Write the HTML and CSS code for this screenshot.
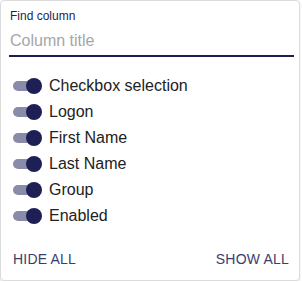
FILE: index.html
```html
<!DOCTYPE html>
<html>
<head>
    <title>Columns</title>
    <link rel="stylesheet" href="styles.css">
</head>
<body>

<div class="panel">
    <div class="find-field">
        <label class="find-label" for="find">Find column</label>
        <input id="find" class="find-input" type="text" placeholder="Column title">
    </div>

    <div class="column-list">
        <label class="column-item"><span class="switch"><span class="track"></span><span class="thumb"></span></span>Checkbox selection</label>
        <label class="column-item"><span class="switch"><span class="track"></span><span class="thumb"></span></span>Logon</label>
        <label class="column-item"><span class="switch"><span class="track"></span><span class="thumb"></span></span>First Name</label>
        <label class="column-item"><span class="switch"><span class="track"></span><span class="thumb"></span></span>Last Name</label>
        <label class="column-item"><span class="switch"><span class="track"></span><span class="thumb"></span></span>Group</label>
        <label class="column-item"><span class="switch"><span class="track"></span><span class="thumb"></span></span>Enabled</label>
    </div>

    <div class="panel-footer">
        <button class="text-button">Hide all</button>
        <button class="text-button">Show all</button>
    </div>
</div>

</body>
</html>
```

FILE: styles.css
```css
body {
    font-family: 'Liberation Sans', Arial, sans-serif;
    background-color: #fff;
    margin: 0;
    padding: 0;
}

.panel {
    width: 298px;
    height: 279px;
    border: 1px solid #dcdcdc;
    border-radius: 4px;
    box-shadow: 0 1px 2px rgba(0, 0, 0, 0.12);
    background-color: #fff;
    display: flex;
    flex-direction: column;
    box-sizing: content-box;
}

.find-field {
    display: flex;
    flex-direction: column;
    padding: 8px 8px 0 8px;
}

.find-label {
    font-size: 12px;
    color: #1d1f50;
    line-height: 14px;
    padding-left: 1px;
}

.find-input {
    font-family: inherit;
    font-size: 16px;
    color: #333;
    border: none;
    border-bottom: 2px solid #1d1f50;
    outline: none;
    padding: 5px 0 5px 1px;
    margin-top: 4px;
    margin-right: 0;
    width: 284px;
}

.find-input::placeholder {
    color: #a6a6a6;
}

.column-list {
    display: flex;
    flex-direction: column;
    padding: 16px 0 0 5px;
}

.column-item {
    display: flex;
    align-items: center;
    height: 26px;
    font-size: 16px;
    color: #222;
}

.switch {
    position: relative;
    width: 40px;
    height: 24px;
    margin-right: 3px;
}

.track {
    position: absolute;
    left: 7px;
    top: 7px;
    width: 26px;
    height: 10px;
    border-radius: 5px;
    background-color: #8a8ba8;
}

.thumb {
    position: absolute;
    left: 20px;
    top: 4px;
    width: 16px;
    height: 16px;
    border-radius: 50%;
    background-color: #1d1f55;
}

.panel-footer {
    display: flex;
    justify-content: space-between;
    margin-top: auto;
    padding: 0 4px 7px 6px;
}

.text-button {
    font-family: inherit;
    font-size: 14px;
    letter-spacing: 0.2px;
    text-transform: uppercase;
    color: #3b3d6e;
    background: none;
    border: none;
    padding: 6px 6px;
    cursor: pointer;
}
```
